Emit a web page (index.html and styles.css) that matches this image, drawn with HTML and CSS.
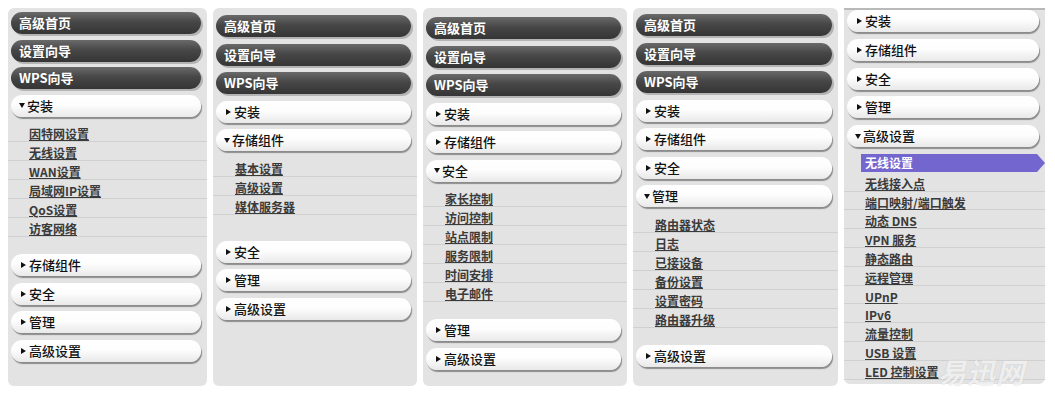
FILE: index.html
```html
<!DOCTYPE html>
<html lang="zh-CN">
<head>
    <meta charset="UTF-8">
    <title>路由器菜单</title>
    <link rel="stylesheet" href="styles.css">
</head>
<body>
    <div class="screens">
        <!-- 安装 展开 -->
        <div class="panel p1">
            <div class="pill dark">高级首页</div>
            <div class="pill dark">设置向导</div>
            <div class="pill dark">WPS向导</div>
            <div class="pill light"><span class="tri down"></span>安装</div>
            <ul class="sub">
                <li><a href="#">因特网设置</a></li>
                <li><a href="#">无线设置</a></li>
                <li><a href="#">WAN设置</a></li>
                <li><a href="#">局域网IP设置</a></li>
                <li><a href="#">QoS设置</a></li>
                <li><a href="#">访客网络</a></li>
            </ul>
            <div class="pill light"><span class="tri"></span>存储组件</div>
            <div class="pill light"><span class="tri"></span>安全</div>
            <div class="pill light"><span class="tri"></span>管理</div>
            <div class="pill light"><span class="tri"></span>高级设置</div>
        </div>

        <!-- 存储组件 展开 -->
        <div class="panel p2">
            <div class="pill dark">高级首页</div>
            <div class="pill dark">设置向导</div>
            <div class="pill dark">WPS向导</div>
            <div class="pill light"><span class="tri"></span>安装</div>
            <div class="pill light"><span class="tri down"></span>存储组件</div>
            <ul class="sub">
                <li><a href="#">基本设置</a></li>
                <li><a href="#">高级设置</a></li>
                <li><a href="#">媒体服务器</a></li>
            </ul>
            <div class="pill light"><span class="tri"></span>安全</div>
            <div class="pill light"><span class="tri"></span>管理</div>
            <div class="pill light"><span class="tri"></span>高级设置</div>
        </div>

        <!-- 安全 展开 -->
        <div class="panel p3">
            <div class="pill dark">高级首页</div>
            <div class="pill dark">设置向导</div>
            <div class="pill dark">WPS向导</div>
            <div class="pill light"><span class="tri"></span>安装</div>
            <div class="pill light"><span class="tri"></span>存储组件</div>
            <div class="pill light"><span class="tri down"></span>安全</div>
            <ul class="sub">
                <li><a href="#">家长控制</a></li>
                <li><a href="#">访问控制</a></li>
                <li><a href="#">站点限制</a></li>
                <li><a href="#">服务限制</a></li>
                <li><a href="#">时间安排</a></li>
                <li><a href="#">电子邮件</a></li>
            </ul>
            <div class="pill light"><span class="tri"></span>管理</div>
            <div class="pill light"><span class="tri"></span>高级设置</div>
        </div>

        <!-- 管理 展开 -->
        <div class="panel p4">
            <div class="pill dark">高级首页</div>
            <div class="pill dark">设置向导</div>
            <div class="pill dark">WPS向导</div>
            <div class="pill light"><span class="tri"></span>安装</div>
            <div class="pill light"><span class="tri"></span>存储组件</div>
            <div class="pill light"><span class="tri"></span>安全</div>
            <div class="pill light"><span class="tri down"></span>管理</div>
            <ul class="sub">
                <li><a href="#">路由器状态</a></li>
                <li><a href="#">日志</a></li>
                <li><a href="#">已接设备</a></li>
                <li><a href="#">备份设置</a></li>
                <li><a href="#">设置密码</a></li>
                <li><a href="#">路由器升级</a></li>
            </ul>
            <div class="pill light"><span class="tri"></span>高级设置</div>
        </div>

        <!-- 高级设置 展开 -->
        <div class="panel p5">
            <div class="pill light"><span class="tri"></span>安装</div>
            <div class="pill light"><span class="tri"></span>存储组件</div>
            <div class="pill light"><span class="tri"></span>安全</div>
            <div class="pill light"><span class="tri"></span>管理</div>
            <div class="pill light"><span class="tri down"></span>高级设置</div>
            <ul class="sub">
                <li class="active"><a href="#">无线设置</a></li>
                <li><a href="#">无线接入点</a></li>
                <li><a href="#">端口映射/端口触发</a></li>
                <li><a href="#">动态 DNS</a></li>
                <li><a href="#">VPN 服务</a></li>
                <li><a href="#">静态路由</a></li>
                <li><a href="#">远程管理</a></li>
                <li><a href="#">UPnP</a></li>
                <li><a href="#">IPv6</a></li>
                <li><a href="#">流量控制</a></li>
                <li><a href="#">USB 设置</a></li>
                <li><a href="#">LED 控制设置</a></li>
            </ul>
            <span class="watermark">易迅网</span>
        </div>
    </div>
</body>
</html>
```

FILE: styles.css
```css
body {
    margin: 0;
    padding: 8px;
    background: #fff;
    font-family: "Noto Sans CJK SC", "DejaVu Sans", sans-serif;
}
.screens {
    display: flex;
    gap: 6px;
    align-items: flex-start;
}
.panel {
    position: relative;
    width: 204px;
    height: 378px;
    box-sizing: border-box;
    padding: 7px 6px 0 3px;
    background: #e3e3e3;
    border-radius: 6px;
}
.p1 { width: 199px; padding-top: 4px; }
.p2 { padding-top: 7px; }
.p3 { padding-top: 9px; }
.p4 { width: 205px; padding-top: 6px; }
.p5 {
    width: 201px;
    height: 376px;
    padding-top: 0;
    border-top: 2px solid #b9b9b9;
    border-radius: 0 0 6px 6px;
}

.pill {
    display: flex;
    align-items: center;
    height: 22px;
    margin-bottom: 6.5px;
    padding-left: 8px;
    border-radius: 11px;
    font-size: 13px;
    line-height: 22px;
}
.pill.dark {
    background: linear-gradient(#6a6a6a, #474747 45%, #353535);
    color: #fff;
    font-weight: bold;
    box-shadow: 2px 2px 0 #b4b4b4;
}
.pill.light {
    background: linear-gradient(#fff, #fdfdfd 45%, #e9e9e9);
    color: #111;
    font-weight: 500;
    box-shadow: 1px 2px 1px #8c8c8c;
}
.p1 .pill.dark { margin-bottom: 5.5px; }
.p5 .pill { margin-bottom: 6.8px; }

.tri {
    display: inline-block;
    width: 0;
    height: 0;
    margin: 0 3px 0 2px;
    border-left: 5px solid #111;
    border-top: 3.5px solid transparent;
    border-bottom: 3.5px solid transparent;
}
.tri.down {
    margin: 0 2px 0 0;
    border-top: 5px solid #111;
    border-left: 3.5px solid transparent;
    border-right: 3.5px solid transparent;
    border-bottom: 0;
}

.sub {
    list-style: none;
    margin: 3.5px -6px 17px -3px;
    padding: 0;
}
.p2 .sub { margin-bottom: 26px; }
.p5 .sub { margin-top: 1px; }
.sub li {
    height: 19px;
    box-sizing: border-box;
    padding-left: 22px;
    border-bottom: 1px solid #d0d0d0;
    line-height: 18px;
}
.p1 .sub li { padding-left: 21px; }
.p5 .sub li { padding-left: 21px; height: 18.8px; }
.sub a {
    color: #3a3a3a;
    font-size: 12px;
    font-weight: bold;
    text-decoration: underline;
}
.p5 .sub li.active {
    padding-left: 17px;
    border-bottom-color: transparent;
}
.sub li.active a {
    display: block;
    height: 18px;
    padding-left: 4px;
    background: #7466cf;
    color: #fff;
    text-decoration: none;
    clip-path: polygon(0 0, calc(100% - 8px) 0, 100% 50%, calc(100% - 8px) 100%, 0 100%);
}

.watermark {
    position: absolute;
    right: 20px;
    bottom: -4px;
    font-size: 28px;
    line-height: 34px;
    font-style: italic;
    font-weight: bold;
    letter-spacing: 1px;
    color: rgba(255, 255, 255, 0.75);
    text-shadow: 0 0 1px rgba(150, 150, 150, 0.5);
}
```
